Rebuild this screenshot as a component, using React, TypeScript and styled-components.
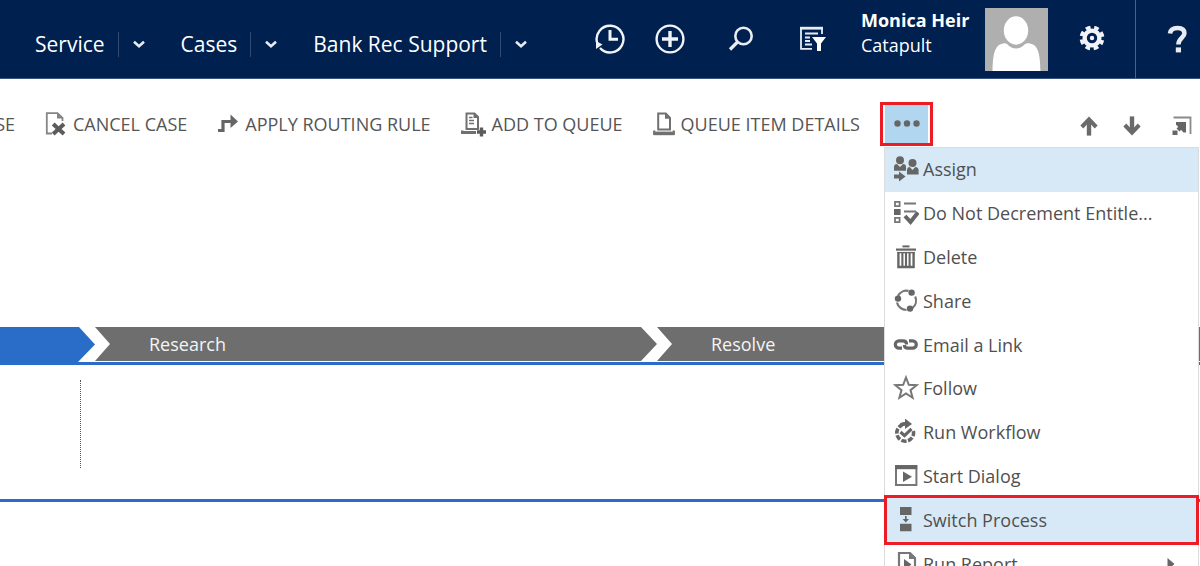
import React from "react";
import styled, { createGlobalStyle, css } from "styled-components";

const GlobalStyle = createGlobalStyle`
  * { box-sizing: border-box; }
  body { margin: 0; background: #fff; font-family: "Open Sans", "Noto Sans", sans-serif; }
  button { font: inherit; color: inherit; background: none; border: 0; padding: 0; margin: 0; cursor: pointer; }
  svg { display: block; flex: none; }
`;

const Page = styled.div`
  min-height: 100vh;
  overflow: hidden;
  display: flex;
  flex-direction: column;
`;

/* ---------- top navigation ---------- */

const TopBar = styled.header`
  display: flex;
  height: 79px;
  background: #00204f;
  border-bottom: 1px solid #3a5580;
  color: #fff;
`;

const Nav = styled.nav`
  display: flex;
  align-items: center;
  padding: 10px 0 0 35px;
`;

const NavLink = styled.a`
  color: #fff;
  text-decoration: none;
  font-size: 21px;
  line-height: 28px;
  white-space: nowrap;
`;

const NavToggle = styled.button`
  display: flex;
  align-items: center;
  height: 25px;
  margin: 0 36px 0 13px;
  padding-left: 14px;
  border-left: 1px solid #33496f;
`;

const Tools = styled.div`
  display: flex;
  margin-left: auto;
`;

const ToolButton = styled.button<{ $width: number }>`
  display: flex;
  align-items: center;
  justify-content: center;
  width: ${(p) => p.$width}px;
  height: 78px;
`;

const User = styled.div`
  width: 143px;
  padding: 8px 0 0 19px;
  font-size: 18px;
  line-height: 25px;
  font-weight: 500;
  white-space: nowrap;
`;

const UserName = styled.div`
  font-weight: 700;
`;

const Avatar = styled.div`
  width: 63px;
  height: 63px;
  margin-top: 8px;
  background: #afafaf;
`;

const Help = styled(ToolButton)`
  border-left: 1px solid #4a6289;
  padding-left: 18px;
`;

/* ---------- command bar ---------- */

const CommandBar = styled.div`
  position: relative;
  display: flex;
  align-items: center;
  height: 44px;
  margin-top: 24px;
  color: #555;
`;

const Command = styled.button`
  display: flex;
  align-items: center;
  gap: 6px;
  margin-right: 30px;
  padding-bottom: 2px;
  font-size: 18px;
  line-height: 24px;
  white-space: nowrap;
`;

const CutCommand = styled(Command)`
  width: 15px;
  justify-content: flex-end;
`;

const MoreButton = styled.button`
  display: flex;
  align-items: center;
  justify-content: center;
  width: 53px;
  height: 44px;
  margin: -2px 0 0 -10px;
  border: 3px solid #ed1c24;
  background: linear-gradient(#b0d6f0, #b0d6f0) center / 43px 100% no-repeat;
`;

const FormNav = styled.div`
  display: flex;
  align-items: center;
  gap: 25px;
  margin-left: auto;
  padding: 2px 8px 0 0;
`;

const PopOutButton = styled.button`
  padding-left: 6px;
`;

/* ---------- overflow menu ---------- */

const Menu = styled.ul`
  position: absolute;
  z-index: 2;
  top: 100%;
  right: 1px;
  display: grid;
  grid-template-rows: repeat(10, 1fr);
  width: 315px;
  height: 440px;
  margin: 0;
  padding: 0;
  list-style: none;
  background: #fff;
  border: 1px solid #dcdcdc;
`;

const MenuRow = styled.li<{ $active?: boolean; $marked?: boolean }>`
  position: relative;
  display: flex;
  background: ${(p) => (p.$active ? "#d7e9f7" : "#fff")};
  ${(p) =>
    p.$marked &&
    css`
      z-index: 1;
      &::after {
        content: "";
        position: absolute;
        inset: -3px -1px;
        border: 3px solid #ed1c24;
        pointer-events: none;
      }
    `}
`;

const MenuButton = styled.button`
  display: flex;
  flex: 1;
  align-items: center;
  gap: 4px;
  padding: 0 23px 1px 8px;
  color: #505050;
  font-size: 18px;
  line-height: 24px;
  text-align: left;
  white-space: nowrap;
`;

const MenuLabel = styled.span`
  flex: 1;
`;

/* ---------- process ribbon ---------- */

const Process = styled.section`
  margin-top: 180px;
`;

const Stages = styled.div`
  display: flex;
  height: 35px;
  margin-right: -19px;
`;

const Stage = styled.div<{ $current?: boolean }>`
  flex: ${(p) => (p.$current ? "0 0 95px" : "1 1 0")};
  height: ${(p) => (p.$current ? 35 : 34)}px;
  padding-left: 54px;
  background: ${(p) => (p.$current ? "#2a6dc8" : "#6e6e6e")};
  color: #f4f4f4;
  font-size: 18px;
  line-height: 35px;
  clip-path: ${(p) =>
    p.$current
      ? "polygon(0 0, calc(100% - 16px) 0, 100% 50%, calc(100% - 17px) 100%, 0 100%)"
      : "polygon(0 0, calc(100% - 16px) 0, 100% 50%, calc(100% - 16px) 100%, 0 100%, 15px 50%)"};
`;

const StageBody = styled.div`
  height: 140px;
  padding: 15px 0 0 80px;
  border-top: 3px solid #2a6dc8;
  border-bottom: 3px solid #2a6dc8;
`;

const Divider = styled.div`
  height: 88px;
  border-left: 1px dotted #555;
`;

/* ---------- icons ---------- */

const G = "#666";

const Chevron = () => (
  <svg width="12" height="8" viewBox="0 0 12 8" fill="none" stroke="#e8ecf2" strokeWidth="2.6">
    <path d="M1 1.8 L6 6.2 L11 1.8" />
  </svg>
);

const Recent = () => (
  <svg width="30" height="30" viewBox="0 0 30 30" fill="none" stroke="#f0f3f7" strokeWidth="2.4">
    <path d="M2.2 19 A13.4 13.4 0 1 1 5 24" />
    <path d="M15 6 V15.3 H23" strokeWidth="3" />
    <path d="M1 17 L7.5 20.5 L1 25 Z" fill="#f0f3f7" stroke="none" />
  </svg>
);

const Create = () => (
  <svg width="30" height="30" viewBox="0 0 30 30" fill="none" stroke="#f0f3f7" strokeWidth="2.4">
    <circle cx="15" cy="15" r="13.4" />
    <path d="M15 7 V23 M7 15 H23" strokeWidth="3.4" />
  </svg>
);

const Search = () => (
  <svg width="26" height="26" viewBox="0 0 26 26" fill="none" stroke="#e8ecf2">
    <circle cx="15.5" cy="10" r="8.2" strokeWidth="2.6" />
    <path d="M9.5 16 L2 23.5" strokeWidth="3.2" />
  </svg>
);

const Find = () => (
  <svg width="28" height="26" viewBox="0 0 28 26" fill="none" stroke="#e8ecf2">
    <path d="M24 8 V2.2 H3 V22.8 H14" strokeWidth="1.8" />
    <path d="M2 2.2 H25" strokeWidth="2.8" />
    <path d="M7 7.5 H20 M7 11.5 H12 M7 15 H12 M7 18.5 H14" strokeWidth="1.8" />
    <path d="M14 11 H28 L23 17.5 V25 H19 V17.5 Z" fill="#fff" stroke="none" />
  </svg>
);

const Gear = () => (
  <svg width="26" height="26" viewBox="0 0 26 26" fill="none" stroke="#f0f3f7">
    <circle cx="13" cy="12" r="7.4" strokeWidth="4.4" />
    <circle cx="13" cy="12" r="10.6" strokeWidth="3.6" strokeDasharray="4.8 3.525" strokeDashoffset="2.4" transform="rotate(22.5 13 12)" />
    <circle cx="13" cy="12" r="2.2" fill="#f0f3f7" stroke="none" />
  </svg>
);

const Question = () => (
  <svg width="20" height="28" viewBox="0 0 20 28" fill="none" stroke="#e8ecf2" strokeWidth="4.6">
    <path d="M3 8.5 C3.5 4.2 7 3 10.6 3 C15 3 17.4 5 17.4 8.2 C17.4 13 11.4 13 11.4 19.5" />
    <path d="M8.8 22.4 H14 V27.4 H8.8 Z" fill="#e8ecf2" stroke="none" />
  </svg>
);

const Person = () => (
  <svg width="63" height="63" viewBox="0 0 63 63" fill="#fff">
    <path d="M7.5 63 C8 48 9 37 18 35.5 C21 34.8 22 35.5 24 38 Q31 43 38 38 C40 35.5 42 34.8 45 35.5 C54 37 55 48 55.5 63 Z" />
    <ellipse cx="31" cy="22.5" rx="13.2" ry="15.2" stroke="#afafaf" strokeWidth="2" />
  </svg>
);

const CancelDoc = () => (
  <svg width="22" height="24" viewBox="0 0 22 24" fill="none" stroke="#858585">
    <path d="M7 21.5 H1.8 V1.2 H12.5 L17.5 6 V9" strokeWidth="1.8" />
    <path d="M12 1 V6.5 H18 Z" fill="#858585" stroke="none" />
    <path d="M8.2 12 L19 22 M19 12 L8.2 22" stroke="#5c5c5c" strokeWidth="4" />
  </svg>
);

const Route = () => (
  <svg width="22" height="20" viewBox="0 0 22 20" fill="none" stroke={G} strokeWidth="3.2">
    <path d="M1 16.5 H6 V7.5 H15" />
    <path d="M13.5 0.5 L21 7.5 L13.5 14 Z" fill={G} stroke="none" />
  </svg>
);

const AddQueue = () => (
  <svg width="25" height="25" viewBox="0 0 25 25" fill="none" stroke="#707070">
    <path d="M5.5 17 V1.5 H13.5 L17 5 V17 Z" strokeWidth="2" />
    <path d="M12.5 1 V6 H18 Z" fill="#707070" stroke="none" />
    <path d="M8 5.5 H11.5 M8 8.5 H13 M8 11.5 H13" strokeWidth="1.6" />
    <path d="M1 18.5 V20.6 H15" strokeWidth="3" />
    <path d="M20.5 15.5 V24.5 M16 20 H25" stroke="#5c5c5c" strokeWidth="3.4" />
  </svg>
);

const QueueItem = () => (
  <svg width="22" height="24" viewBox="0 0 22 24" fill="none" stroke="#707070">
    <path d="M5.2 17.5 V1.5 H12.8 L17 5.8 V17.5 Z" strokeWidth="2" />
    <path d="M12 1 V6.8 H18 Z" fill="#707070" stroke="none" />
    <path d="M1.2 18.5 V21.8 H20.8 V18.5" strokeWidth="2.2" />
    <path d="M1 21.4 H21" strokeWidth="3.6" />
  </svg>
);

const Dots = () => (
  <svg width="26" height="8" viewBox="0 0 26 8" fill={G}>
    <circle cx="3.5" cy="3.5" r="3.2" />
    <circle cx="13" cy="3.5" r="3.2" />
    <circle cx="22.5" cy="3.5" r="3.2" />
  </svg>
);

const Arrow = ({ down }: { down?: boolean }) => (
  <svg width="18" height="20" viewBox="0 0 18 20" fill="none" stroke="#6a6a6a">
    <g transform={down ? "rotate(180 9 10)" : undefined}>
      <path d="M9 3 V19.6" strokeWidth="4.4" />
      <path d="M1.8 11 L9 3.4 L16.2 11" strokeWidth="4" />
    </g>
  </svg>
);

const PopOut = () => (
  <svg width="20" height="20" viewBox="0 0 20 20" fill="none" stroke="#777">
    <path d="M1.5 1.5 H18.5 V18" stroke="#8a8a8a" strokeWidth="1.8" />
    <path d="M4 6 H14 V16.5 H11.5 L4 8.5 Z" fill={G} stroke="none" />
    <path d="M12 8 L6 14" stroke={G} strokeWidth="4" />
    <path d="M0.5 14.5 H5.5 V19 H0.5 Z" fill={G} stroke="none" />
  </svg>
);

const menuIcons = {
  assign: (
    <g fill={G}>
      <circle cx="7" cy="4.2" r="4" />
      <path d="M1 14.8 V11 Q1 8.2 4 8 L7 11 L10 8 Q13 8.2 13 11 V14.8 Z" />
      <circle cx="19.5" cy="7" r="4" />
      <path d="M14 18.6 V14.2 Q14 11.4 16.8 11 L19.5 14 L22.3 11 Q25.6 11.4 25.6 14.2 V18.6 Z" />
      <path d="M1 18.4 H6 V15.6 L12.6 20.5 L6 25.4 V22.6 H1 Z" />
    </g>
  ),
  entitlement: (
    <g fill="none" stroke="#777">
      <path d="M2 1.8 H6.6 V6.2 H2 Z M2 17.8 H6.6 V22.2 H2 Z" strokeWidth="1.8" />
      <path d="M1 9 H7.6 V15 H1 Z" fill={G} stroke="none" />
      <path d="M11 3.5 H23 M11 11.5 H23" strokeWidth="2" />
      <path d="M12 16 L17.5 22 L25 12.5" stroke={G} strokeWidth="4" />
    </g>
  ),
  remove: (
    <g fill="none" stroke={G}>
      <path d="M9.5 2.4 H16.5" strokeWidth="2" />
      <path d="M3 5.6 H23" strokeWidth="2.2" />
      <path d="M5.4 8 V23 H20.6 V8" strokeWidth="2.4" />
      <path d="M9.4 8 V22 M13 8 V22 M16.6 8 V22" strokeWidth="2.1" />
      <path d="M4.2 8.6 H21.8" strokeWidth="1.4" />
    </g>
  ),
  share: (
    <g fill="none" stroke="#777" strokeWidth="2.2">
      <path d="M5 8 A9.4 9.4 0 0 1 15.5 2.9 M22.2 8.5 A9.8 9.8 0 0 1 19.5 20 M13.5 22 A9.6 9.6 0 0 1 4 14.5" />
      <g fill={G} stroke="none">
        <circle cx="18.6" cy="4.6" r="3.2" />
        <circle cx="5" cy="10.6" r="3.2" />
        <circle cx="17" cy="20.6" r="3.2" />
      </g>
    </g>
  ),
  link: (
    <g fill="none" stroke={G} strokeWidth="3.2">
      <path d="M9 16.2 H6 A3.7 3.7 0 0 1 6 8.8 H10 Q13.6 8.8 13.6 12.6" />
      <path d="M16 8.8 H19.6 A3.7 3.7 0 0 1 19.6 16.2 H15 Q11.4 16.2 11.4 13" />
    </g>
  ),
  follow: (
    <path
      d="M13 2.5 L15.8 9.8 L23.6 10.2 L17.5 15.1 L19.6 22.8 L13 18.4 L6.4 22.8 L8.5 15.1 L2.4 10.2 L10.2 9.8 Z"
      fill="none"
      stroke="#777"
      strokeWidth="2"
    />
  ),
  workflow: (
    <g fill="none" stroke={G}>
      <path d="M20.4 12 A8.4 8.4 0 1 1 9 6" strokeWidth="3.6" strokeDasharray="5.2 1.6" />
      <path d="M8 6 Q10 4.6 14 5" strokeWidth="3.6" />
      <path d="M12 -0.5 L19 5 L12 10 Z" fill={G} stroke="none" />
      <path d="M7.5 13 L11.5 16.6 L18.5 9.8" strokeWidth="3.2" />
    </g>
  ),
  dialog: (
    <g fill="none" stroke={G}>
      <path d="M3 3 H23.4 V22 H3 Z" strokeWidth="2" stroke="#777" />
      <path d="M2.2 4.2 H24.2" strokeWidth="4" />
      <path d="M10 8.5 L19 13.7 L10 19 Z" fill={G} stroke="none" />
    </g>
  ),
  process: (
    <g fill={G}>
      <path d="M7 0 H18.5 V8 H7 Z M7 16.8 H18.5 V24.2 H7 Z" />
      <path d="M12 9 H13.6 V12 H16 L12.8 15.4 L9.6 12 H12 Z" />
    </g>
  ),
  report: (
    <g fill="none" stroke="#777">
      <path d="M6 25 V2 H17 L22 7 V25 Z" strokeWidth="2.2" />
      <path d="M16 1.6 V8 H22.5 Z" fill="#777" stroke="none" />
      <path d="M11 8 L18.5 13.5 L11 19 Z" fill={G} stroke="none" />
    </g>
  ),
};

type MenuEntry = {
  icon: keyof typeof menuIcons;
  label: string;
  active?: boolean;
  marked?: boolean;
  submenu?: boolean;
};

const entries: MenuEntry[] = [
  { icon: "assign", label: "Assign", active: true },
  { icon: "entitlement", label: "Do Not Decrement Entitle..." },
  { icon: "remove", label: "Delete" },
  { icon: "share", label: "Share" },
  { icon: "link", label: "Email a Link" },
  { icon: "follow", label: "Follow" },
  { icon: "workflow", label: "Run Workflow" },
  { icon: "dialog", label: "Start Dialog" },
  { icon: "process", label: "Switch Process", active: true, marked: true },
  { icon: "report", label: "Run Report", submenu: true },
];

const areas = ["Service", "Cases", "Bank Rec Support"];

export default function App() {
  return (
    <Page>
      <GlobalStyle />
      <TopBar>
        <Nav>
          {areas.map((area) => (
            <React.Fragment key={area}>
              <NavLink href="#">{area}</NavLink>
              <NavToggle aria-label={`Open ${area}`}>
                <Chevron />
              </NavToggle>
            </React.Fragment>
          ))}
        </Nav>
        <Tools>
          <ToolButton $width={60} aria-label="Recent"><Recent /></ToolButton>
          <ToolButton $width={60} aria-label="Create"><Create /></ToolButton>
          <ToolButton $width={82} aria-label="Search"><Search /></ToolButton>
          <ToolButton $width={60} aria-label="Advanced find"><Find /></ToolButton>
          <User>
            <UserName>Monica Heir</UserName>
            <div>Catapult</div>
          </User>
          <Avatar><Person /></Avatar>
          <ToolButton $width={87} aria-label="Settings"><Gear /></ToolButton>
          <Help $width={65} aria-label="Help"><Question /></Help>
        </Tools>
      </TopBar>

      <CommandBar>
        <CutCommand>SE</CutCommand>
        <Command><CancelDoc />CANCEL CASE</Command>
        <Command><Route />APPLY ROUTING RULE</Command>
        <Command><AddQueue />ADD TO QUEUE</Command>
        <Command><QueueItem />QUEUE ITEM DETAILS</Command>
        <MoreButton aria-label="More commands"><Dots /></MoreButton>
        <FormNav>
          <button aria-label="Previous record"><Arrow /></button>
          <button aria-label="Next record"><Arrow down /></button>
          <PopOutButton aria-label="Pop out"><PopOut /></PopOutButton>
        </FormNav>
        <Menu>
          {entries.map((entry) => (
            <MenuRow key={entry.label} $active={entry.active} $marked={entry.marked}>
              <MenuButton>
                <svg width="26" height="26" viewBox="0 0 26 26">{menuIcons[entry.icon]}</svg>
                <MenuLabel>{entry.label}</MenuLabel>
                {entry.submenu && (
                  <svg width="8" height="12" viewBox="0 0 8 12" fill={G}>
                    <path d="M0.5 0 L7.5 6 L0.5 12 Z" />
                  </svg>
                )}
              </MenuButton>
            </MenuRow>
          ))}
        </Menu>
      </CommandBar>

      <Process>
        <Stages>
          <Stage $current />
          <Stage>Research</Stage>
          <Stage>Resolve</Stage>
        </Stages>
        <StageBody>
          <Divider />
        </StageBody>
      </Process>
    </Page>
  );
}
